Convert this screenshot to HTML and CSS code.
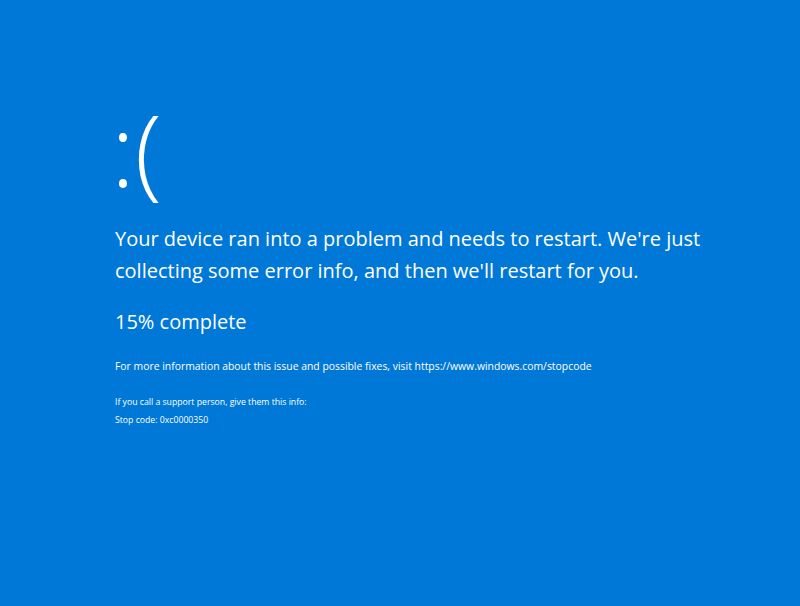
FILE: index.html
```html
<!DOCTYPE html>
<html>
<head>
<meta charset="utf-8">
<link rel="stylesheet" href="styles.css">
</head>
<body>
<main class="bsod">
  <div class="face">:(</div>
  <p class="message">Your device ran into a problem and needs to restart. We're just<br>collecting some error info, and then we'll restart for you.</p>
  <p class="progress">15% complete</p>
  <p class="info">For more information about this issue and possible fixes, visit https://www.windows.com/stopcode</p>
  <div class="support">
    <p class="small">If you call a support person, give them this info:</p>
    <p class="small">Stop code: 0xc0000350</p>
  </div>
</main>
</body>
</html>
```
FILE: styles.css
```css
html, body {
  margin: 0;
  padding: 0;
  height: 100%;
  background: #0078d7;
}
.bsod {
  color: #fff;
  font-family: "Open Sans", "Noto Sans", sans-serif;
  padding: 88px 0 0 110px;
  display: flex;
  flex-direction: column;
  align-items: flex-start;
}
.face {
  font-weight: 300;
  font-size: 100px;
  line-height: 120px;
  margin-left: 1px;
}
.message {
  margin: 15px 0 0 5px;
  font-size: 20px;
  line-height: 32px;
  font-weight: 400;
}
.progress {
  margin: 21px 0 0 5px;
  font-size: 20px;
  line-height: 28px;
}
.info {
  margin: 22px 0 0 5px;
  font-size: 10.4px;
  line-height: 16px;
}
.support {
  margin: 20px 0 0 5px;
  display: flex;
  flex-direction: column;
  gap: 2px;
}
.small {
  margin: 0;
  font-size: 8.7px;
  line-height: 16px;
}
```
